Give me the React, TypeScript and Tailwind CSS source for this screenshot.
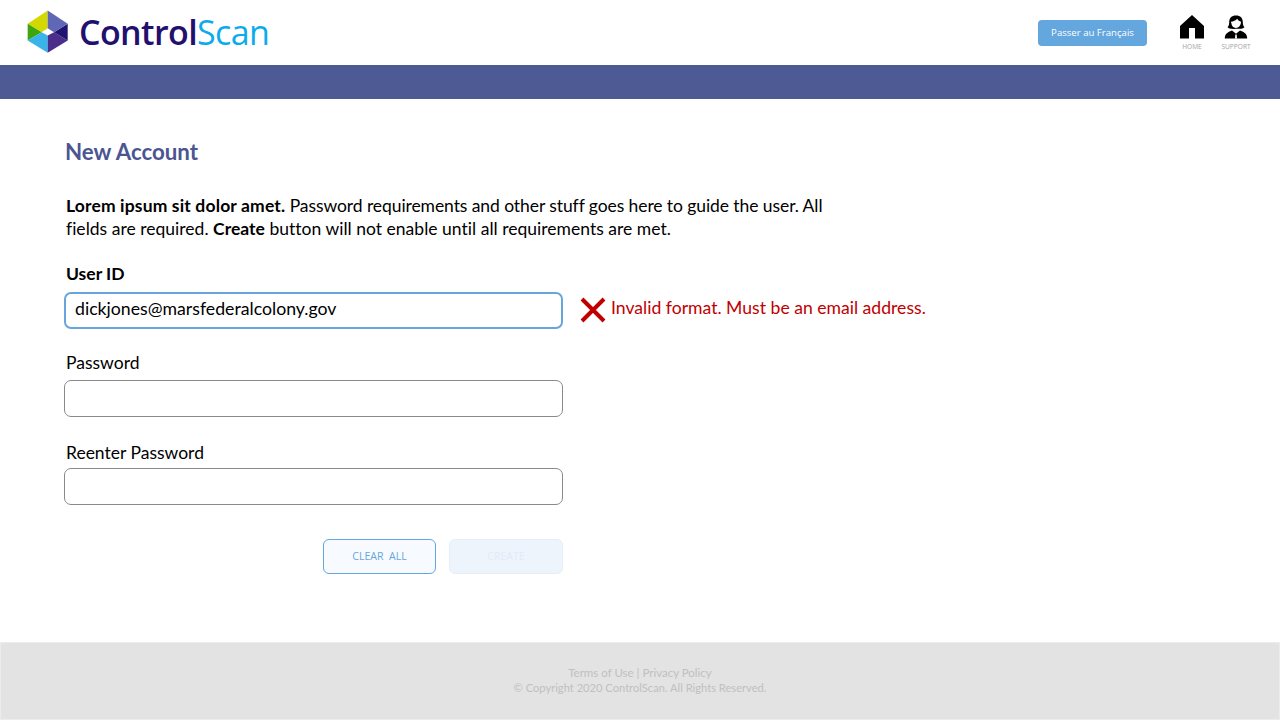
const font = "font-['Lato','Noto_Sans',sans-serif]";

function LogoMark() {
  return (
    <svg width="42" height="44" viewBox="27 9.5 42 44" className="shrink-0 -mt-[1px]">
      <polygon points="47.7,10 27.7,23.3 41.7,31.7 47.7,27.7" fill="#d3d800" />
      <polygon points="27.7,23.3 27.7,40 41.7,31.7" fill="#3ea40f" />
      <polygon points="27.7,40 47.7,52.3 47.7,35 41.7,31.7" fill="#38b4ea" />
      <polygon points="47.7,52.3 67.7,40 54,31.7 47.7,35" fill="#4b2e8c" />
      <polygon points="67.7,40 67.7,23.3 54,31.7" fill="#1f1470" />
      <polygon points="47.7,10 67.7,23.3 54,31.7 47.7,27.7" fill="#6068b5" />
    </svg>
  );
}

function HomeIcon() {
  return (
    <svg width="26" height="24" viewBox="0 0 26 24">
      <path d="M13 0 L25 11 V23.5 H16 V13 H10 V23.5 H1 V11 Z" fill="#000" />
    </svg>
  );
}

function SupportIcon() {
  return (
    <svg width="24" height="24" viewBox="0 0 24 24">
      {/* hair */}
      <path d="M12 0.5 C7.5 0.5 5.2 3.2 5.2 7 C5.2 9.5 4.8 11 3.5 12.3 C5 13.6 7 14 8.5 13.8 H15.5 C17 14 19 13.6 20.5 12.3 C19.2 11 18.8 9.5 18.8 7 C18.8 3.2 16.5 0.5 12 0.5 Z" fill="#000" />
      {/* face */}
      <path d="M7 6.8 C9.2 6.6 11.8 5.6 13.2 3.8 C14.2 5.5 15.6 6.4 17 6.8 C17 10.4 14.6 13 12 13 C9.4 13 7 10.4 7 6.8 Z" fill="#fff" />
      {/* headset mic */}
      <path d="M6.8 8 V11 C6.8 12.8 8.6 13.6 11 13.6" stroke="#000" strokeWidth="1" fill="none" />
      {/* jacket */}
      <path d="M0.8 23.5 C0.8 19.5 2.5 17.5 8 15.4 L12 18.8 L16 15.4 C21.5 17.5 23.2 19.5 23.2 23.5 Z" fill="#000" />
      {/* collar */}
      <path d="M9.4 14.8 L12 17.4 L14.6 14.8 L14 14 H10 Z M11.3 19.4 H12.7 L13 23.5 H11 Z" fill="#fff" />
    </svg>
  );
}

function Field({ label, bold, value, active, inputGap }: { label: string; bold?: boolean; value?: string; active?: boolean; inputGap: string }) {
  return (
    <div className="flex flex-col">
      <label className={`pl-[2px] h-[24px] leading-[24px] text-[17.5px] text-black ${bold ? 'font-bold' : ''}`}>{label}</label>
      <div
        className={`${inputGap} w-[499px] h-[37px] bg-white rounded-[7px] flex items-center text-[17.7px] text-black ${
          active ? 'border-2 border-[#66a6dd] pl-[9px] pb-[2px]' : 'border border-[#8a8a8a] pl-[10px]'
        }`}
      >
        {value}
      </div>
    </div>
  );
}

export default function App() {
  return (
    <div className={`${font} w-[1280px] h-[720px] flex flex-col bg-white overflow-hidden`}>
      <header className="h-[65px] flex items-center justify-between pl-[27px] pr-[29px] shrink-0">
        <div className="flex items-center gap-[10px]">
          <LogoMark />
          <span className="-mt-[2px] text-[34px] leading-none tracking-[-0.6px] font-['Open_Sans',sans-serif]">
            <span className="text-[#22106f] font-semibold">Control</span>
            <span className="text-[#0cabeb]">Scan</span>
          </span>
        </div>
        <div className="flex items-center">
          <button className="w-[109px] h-[26px] pt-[1px] rounded-[4px] bg-[#64a6de] text-white text-[9.6px] font-['Open_Sans',sans-serif]">
            Passer au Français
          </button>
          <div className="ml-[32px] flex flex-col items-center w-[26px]">
            <HomeIcon />
            <span className="mt-[3px] text-[6.6px] leading-[9px] text-[#a3a3a3] font-['Open_Sans',sans-serif]">HOME</span>
          </div>
          <div className="ml-[16px] flex flex-col items-center w-[30px]">
            <SupportIcon />
            <span className="mt-[3px] text-[6.6px] leading-[9px] text-[#a3a3a3] font-['Open_Sans',sans-serif]">SUPPORT</span>
          </div>
        </div>
      </header>

      <div className="h-[34px] bg-[#4e5a94] shrink-0" />

      <main className="flex-1 pl-[64px] pt-[38px] flex flex-col">
        <h1 className="pl-[1px] text-[22.3px] leading-[30px] font-bold text-[#4a5592]">New Account</h1>
        <p className="mt-[27px] pl-[2px] w-[790px] text-[17.5px] leading-[23px] text-black">
          <span className="tracking-[-0.08px]">
            <b className="tracking-[0.15px]">Lorem ipsum sit dolor amet.</b> Password requirements and other stuff goes here to guide the user. All
          </span>{' '}
          <span className="tracking-[0.02px]">
            fields are required. <b>Create</b> button will not enable until all requirements are met.
          </span>
        </p>
        <div className="mt-[22px] flex">
          <Field label="User ID" bold value="dickjones@marsfederalcolony.gov" active inputGap="mt-[6px]" />
          <div className="ml-[17px] mt-[30px] h-[37px] flex items-center">
            <svg width="26" height="26" viewBox="0 0 26 26" className="-mt-[1px]">
              <path d="M2 2 L24 24 M24 2 L2 24" stroke="#c00000" strokeWidth="4" />
            </svg>
            <span className="ml-[5px] -mt-[4px] text-[17.6px] text-[#c00000]">Invalid format. Must be an email address.</span>
          </div>
        </div>
        <div className="mt-[22px]">
          <Field label="Password" inputGap="mt-[5px]" />
        </div>
        <div className="mt-[24px]">
          <Field label="Reenter Password" inputGap="mt-[3px]" />
        </div>
        <div className="mt-[34px] w-[499px] flex justify-end gap-[13px]">
          <button className="w-[113px] h-[35px] rounded-[6px] border border-[#66a6dd] bg-[#f7fbff] text-[#66a6dd] text-[10.6px] font-['Open_Sans',sans-serif]">
            CLEAR&nbsp; ALL
          </button>
          <button className="w-[114px] h-[35px] rounded-[6px] border border-[#e4eefa] bg-[#eef4fc] text-[#e2ebf7] text-[10.6px] font-['Open_Sans',sans-serif]">
            CREATE
          </button>
        </div>
      </main>

      <footer className="h-[78px] shrink-0 bg-[#e3e3e3] border border-[#ececec] flex flex-col items-center pt-[22px] text-[11.5px] leading-[15px] text-[#c0c0c0]">
        <span>Terms of Use | Privacy Policy</span>
        <span className="text-[11.15px]">© Copyright 2020 ControlScan. All Rights Reserved.</span>
      </footer>
    </div>
  );
}
